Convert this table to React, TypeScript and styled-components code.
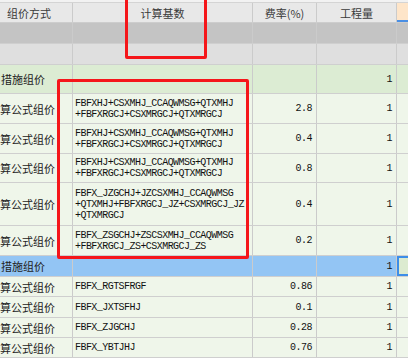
import styled, { createGlobalStyle } from 'styled-components';

const GlobalStyle = createGlobalStyle`
  html, body {
    margin: 0;
    padding: 0;
    background: #ffffff;
  }
`;

const CJK = `'Noto Sans CJK SC', 'Noto Sans', sans-serif`;
const MONO = `'Liberation Mono', 'DejaVu Sans Mono', monospace`;

const COLUMNS = '87px 180px 64px 80px 40px';

type RowKind = 'gray' | 'blank' | 'group' | 'item' | 'active';

interface GridRow {
  kind: RowKind;
  height: number;
  name?: string;
  lines?: string[];
  rate?: string;
  qty?: string;
}

const rowBg: Record<RowKind, string> = {
  gray: '#c4c4c4',
  blank: '#dfdfdf',
  group: '#dcecd3',
  item: '#eff6ea',
  active: '#93c5f4',
};

const rows: GridRow[] = [
  { kind: 'gray', height: 21 },
  { kind: 'blank', height: 21 },
  { kind: 'group', height: 29, name: '措施组价', qty: '1' },
  {
    kind: 'item',
    height: 30,
    name: '计算公式组价',
    lines: ['FBFXHJ+CSXMHJ_CCAQWMSG+QTXMHJ', '+FBFXRGCJ+CSXMRGCJ+QTXMRGCJ'],
    rate: '2.8',
    qty: '1',
  },
  {
    kind: 'item',
    height: 30,
    name: '计算公式组价',
    lines: ['FBFXHJ+CSXMHJ_CCAQWMSG+QTXMHJ', '+FBFXRGCJ+CSXMRGCJ+QTXMRGCJ'],
    rate: '0.4',
    qty: '1',
  },
  {
    kind: 'item',
    height: 29,
    name: '计算公式组价',
    lines: ['FBFXHJ+CSXMHJ_CCAQWMSG+QTXMHJ', '+FBFXRGCJ+CSXMRGCJ+QTXMRGCJ'],
    rate: '0.8',
    qty: '1',
  },
  {
    kind: 'item',
    height: 43,
    name: '计算公式组价',
    lines: [
      'FBFX_JZGCHJ+JZCSXMHJ_CCAQWMSG',
      '+QTXMHJ+FBFXRGCJ_JZ+CSXMRGCJ_JZ',
      '+QTXMRGCJ',
    ],
    rate: '0.4',
    qty: '1',
  },
  {
    kind: 'item',
    height: 30,
    name: '计算公式组价',
    lines: ['FBFX_ZSGCHJ+ZSCSXMHJ_CCAQWMSG', '+FBFXRGCJ_ZS+CSXMRGCJ_ZS'],
    rate: '0.2',
    qty: '1',
  },
  { kind: 'active', height: 21, name: '措施组价', qty: '1' },
  { kind: 'item', height: 20, name: '计算公式组价', lines: ['FBFX_RGTSFRGF'], rate: '0.86', qty: '1' },
  { kind: 'item', height: 21, name: '计算公式组价', lines: ['FBFX_JXTSFHJ'], rate: '0.1', qty: '1' },
  { kind: 'item', height: 20, name: '计算公式组价', lines: ['FBFX_ZJGCHJ'], rate: '0.28', qty: '1' },
  { kind: 'item', height: 20, name: '计算公式组价', lines: ['FBFX_YBTJHJ'], rate: '0.76', qty: '1' },
];

const Page = styled.div`
  position: relative;
  width: 408px;
  height: 358px;
  overflow: hidden;
  background: #ffffff;
  font-family: ${CJK};
  color: #222222;
`;

const TopStrip = styled.div`
  height: 2px;
  background: #f2f2f2;
  border-bottom: 1px solid #d4d4d4;
`;

const Row = styled.div<{ $bg: string; $h: number }>`
  display: grid;
  grid-template-columns: ${COLUMNS};
  margin-left: -14px;
  height: ${(p) => p.$h}px;
  box-sizing: border-box;
  background: ${(p) => p.$bg};
  border-bottom: 1px solid #cfcfcf;
`;

const HeaderRow = styled(Row)`
  border-bottom: 1px solid #cdcdcd;
`;

const Cell = styled.div<{ $align?: 'left' | 'center' | 'right' }>`
  display: flex;
  align-items: center;
  justify-content: ${(p) =>
    p.$align === 'center' ? 'center' : p.$align === 'right' ? 'flex-end' : 'flex-start'};
  box-sizing: border-box;
  padding: 0 3px;
  border-right: 1px solid #cbcbcb;
  overflow: hidden;
  white-space: nowrap;
`;

const HeadCell = styled(Cell)`
  font-size: 11px;
  color: #3a3a3a;
`;

const MarkedHead = styled(HeadCell)`
  background: #fee5c9;
  border-right: none;
  box-shadow: inset 0 -2px 0 #4a8fe4;
`;

/* group rows sit one tree level further out than the formula rows */
const NameCell = styled(Cell)<{ $indent: number }>`
  font-size: 11px;
  padding-left: ${(p) => p.$indent}px;
`;

const FormulaCell = styled(Cell)`
  flex-direction: column;
  align-items: flex-start;
  justify-content: center;
  padding-left: 2px;
`;

const FormulaLine = styled.div`
  font-family: ${MONO};
  font-size: 10px;
  letter-spacing: -0.55px;
  line-height: 11px;
  color: #111111;
`;

const NumCell = styled(Cell)`
  font-family: ${MONO};
  font-size: 10px;
  letter-spacing: -0.5px;
  padding-right: 4px;
  color: #111111;
`;

const EdgeCell = styled(Cell)<{ $selected: boolean }>`
  border-right: none;
  ${(p) =>
    p.$selected &&
    `
    background: #dcebd0;
    box-shadow: inset 2px 2px 0 #3d8ee8, inset 0 -2px 0 #3d8ee8;
  `}
`;

const RedFrame = styled.div<{ $x: number; $y: number; $w: number; $h: number }>`
  position: absolute;
  left: ${(p) => p.$x}px;
  top: ${(p) => p.$y}px;
  width: ${(p) => p.$w}px;
  height: ${(p) => p.$h}px;
  box-sizing: border-box;
  border: 3px solid #f5161a;
  border-radius: 2px;
  pointer-events: none;
`;

export default function App() {
  return (
    <>
      <GlobalStyle />
      <Page>
        <TopStrip />
        <HeaderRow $bg="#e8e8e8" $h={20}>
          <HeadCell $align="center">组价方式</HeadCell>
          <HeadCell $align="center">计算基数</HeadCell>
          <HeadCell $align="center">费率(%)</HeadCell>
          <HeadCell $align="center">工程量</HeadCell>
          <MarkedHead />
        </HeaderRow>
        {rows.map((r, i) => {
          const isGroup = r.kind === 'group' || r.kind === 'active';
          return (
            <Row key={i} $bg={rowBg[r.kind]} $h={r.height}>
              <NameCell $indent={isGroup ? 15 : 3}>{r.name}</NameCell>
              <FormulaCell>
                {r.lines?.map((line) => (
                  <FormulaLine key={line}>{line}</FormulaLine>
                ))}
              </FormulaCell>
              <NumCell $align="right">{r.rate}</NumCell>
              <NumCell $align="right">{r.qty}</NumCell>
              <EdgeCell $selected={r.kind === 'active'} />
            </Row>
          );
        })}
        <RedFrame $x={125} $y={-4} $w={82} $h={63} />
        <RedFrame $x={57} $y={79} $w={192} $h={180} />
      </Page>
    </>
  );
}
